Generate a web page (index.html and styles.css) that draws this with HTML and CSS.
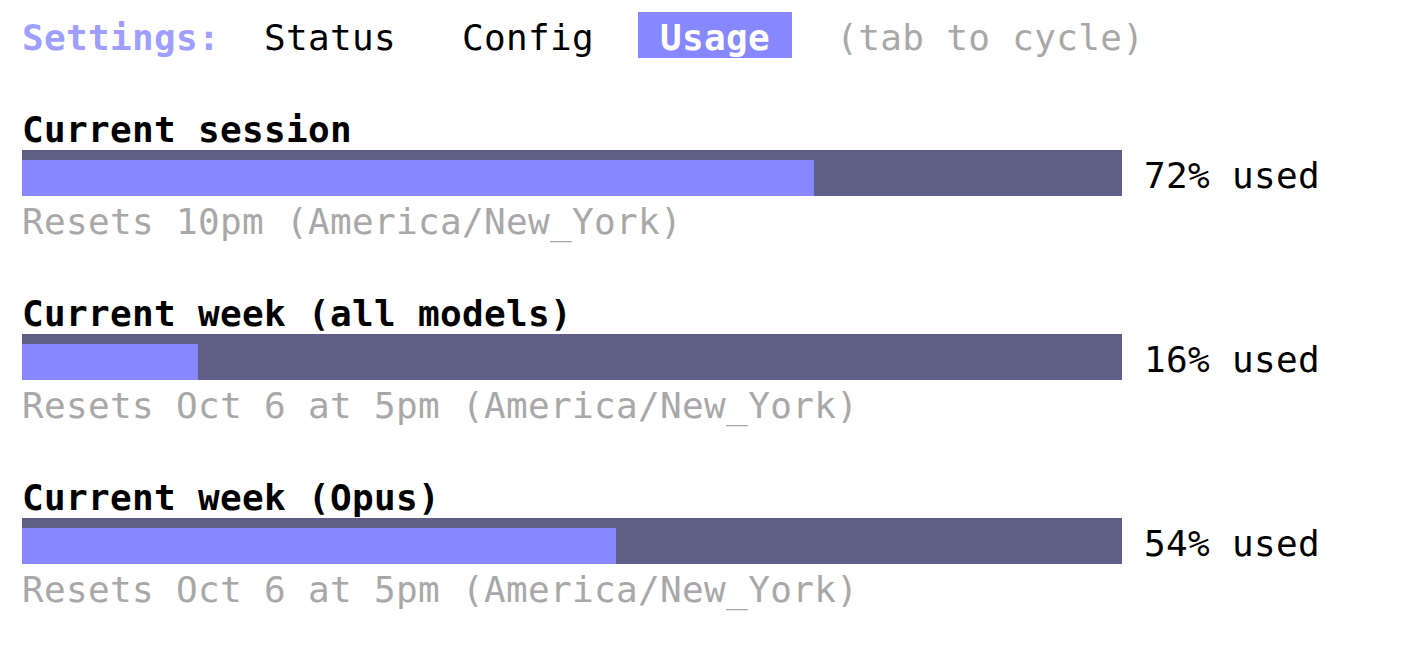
FILE: index.html
```html
<!DOCTYPE html>
<html lang="en">
<head>
  <meta charset="UTF-8" />
  <meta name="viewport" content="width=device-width, initial-scale=1.0"/>
  <title>Settings - Usage</title>
  <link rel="stylesheet" href="styles.css">
</head>
<body>
  <div class="screen">
    <div class="tabs">
      <span class="label">Settings:</span>
      <span class="tab">Status</span>
      <span class="tab">Config</span>
      <span class="tab active">Usage</span>
      <span class="hint">(tab to cycle)</span>
    </div>

    <div class="usage">
      <div class="title">Current session</div>
      <div class="meter">
        <div class="track"><div class="fill" style="width: 72%"></div></div>
        <span class="pct">72% used</span>
      </div>
      <div class="reset">Resets 10pm (America/New_York)</div>
    </div>

    <div class="usage">
      <div class="title">Current week (all models)</div>
      <div class="meter">
        <div class="track"><div class="fill" style="width: 16%"></div></div>
        <span class="pct">16% used</span>
      </div>
      <div class="reset">Resets Oct 6 at 5pm (America/New_York)</div>
    </div>

    <div class="usage">
      <div class="title">Current week (Opus)</div>
      <div class="meter">
        <div class="track"><div class="fill" style="width: 54%"></div></div>
        <span class="pct">54% used</span>
      </div>
      <div class="reset">Resets Oct 6 at 5pm (America/New_York)</div>
    </div>
  </div>
</body>
</html>
```

FILE: styles.css
```css
* {
  box-sizing: border-box;
}

body {
  margin: 0;
  padding: 0;
  background: #fff;
  color: #000;
  font-family: 'DejaVu Sans Mono', 'Liberation Mono', monospace;
  font-size: 36px;
  letter-spacing: 0.33px;
  line-height: 40px;
}

.screen {
  padding: 12px 22px;
}

/* one char cell = 22px wide, 46px tall (40 + 6 top) */
.tabs {
  display: flex;
  white-space: pre;
}

.tabs span,
.title,
.reset,
.pct {
  padding-top: 6px;
}

.label {
  color: #9f9fff;
  font-weight: bold;
  margin-right: 44px;
}

.tab {
  margin-right: 66px;
}

.tab:nth-of-type(3) {
  margin-right: 44px;
}

.tab.active {
  background-color: #8787ff;
  color: #fff;
  font-weight: bold;
  padding: 6px 22px 0;
  margin-right: 44px;
}

.hint {
  color: #a8a8a8;
}

.usage {
  margin-top: 46px;
}

.title {
  font-weight: bold;
}

.meter {
  display: flex;
  align-items: center;
}

.track {
  width: 1100px;
  height: 46px;
  padding-top: 10px;
  background-color: #5f5f87;
  margin-right: 22px;
}

.fill {
  height: 100%;
  background-color: #8787ff;
}

.pct {
  white-space: pre;
}

.reset {
  color: #a8a8a8;
}
```
